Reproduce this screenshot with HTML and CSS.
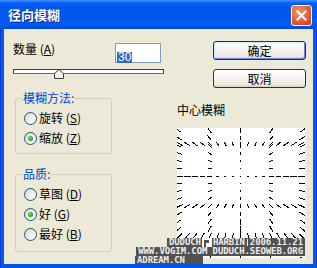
FILE: index.html
```html
<!DOCTYPE html>
<html lang="zh-CN">
<head>
    <meta charset="UTF-8">
    <meta name="viewport" content="width=device-width, initial-scale=1.0">
    <title>径向模糊</title>
    <link rel="stylesheet" href="styles.css">
</head>
<body>

    <div class="window">
        <!-- Title bar -->
        <div class="titlebar">
            <span class="title">径向模糊</span>
            <span class="close">
                <svg width="13" height="13" viewBox="0 0 13 13">
                    <path d="M2.5 2.5 L10.5 10.5 M10.5 2.5 L2.5 10.5" stroke="#fff" stroke-width="2.2" stroke-linecap="square"/>
                </svg>
            </span>
        </div>

        <div class="client">
            <!-- Left column: amount, slider, options -->
            <div class="left">
                <div class="amount">
                    <span class="label">数量 (<u>A</u>)</span>
                    <div class="field"><span class="sel">30</span></div>
                </div>

                <div class="slider">
                    <div class="track"></div>
                    <svg class="thumb" width="10" height="10" viewBox="0 0 10 10">
                        <polygon points="0.5,9.5 0.5,4.5 5,0.5 9.5,4.5 9.5,9.5" fill="#F4F3EE" stroke="#3C3C3C"/>
                    </svg>
                </div>

                <fieldset class="group method">
                    <legend>模糊方法:</legend>
                    <div class="radio"><span class="dot"></span>旋转 (<u>S</u>)</div>
                    <div class="radio"><span class="dot on"></span>缩放 (<u>Z</u>)</div>
                </fieldset>

                <fieldset class="group quality">
                    <legend>品质:</legend>
                    <div class="radio"><span class="dot"></span>草图 (<u>D</u>)</div>
                    <div class="radio"><span class="dot on"></span>好 (<u>G</u>)</div>
                    <div class="radio"><span class="dot"></span>最好 (<u>B</u>)</div>
                </fieldset>
            </div>

            <!-- Right column: buttons and blur centre -->
            <div class="right">
                <div class="btn default">确定</div>
                <div class="btn">取消</div>
                <div class="center-label">中心模糊</div>
                <svg class="preview" id="preview" width="128" height="130" viewBox="0 0 128 130" shape-rendering="crispEdges"></svg>
            </div>
        </div>

        <!-- Watermark stamped over the screenshot -->
        <div class="watermark">
            <div class="wm-row">DUDUCH<svg class="wm-logo" width="10" height="9" viewBox="0 0 10 9"><rect width="10" height="9" fill="#fff"/><rect x="2" y="2" width="5" height="3" fill="#515151"/><rect x="2" y="5" width="2" height="4" fill="#515151"/></svg>HARBIN<span class="wm-bar"></span>2006.11.21</div>
            <div class="wm-row">WWW.VOGIM.COM DUDUCH.SEOWEB.ORG</div>
            <div class="wm-row short">ADREAM.CN</div>
        </div>
    </div>

    <script src="script.js"></script>
</body>
</html>
```

FILE: styles.css
```css
* {
    box-sizing: border-box;
}
body {
    margin: 0;
    font-family: "Noto Sans CJK SC", "Liberation Sans", sans-serif;
    font-size: 12px;
}
.window {
    position: relative;
    width: 317px;
    height: 268px;
    padding: 0 4px 4px;
    display: flex;
    flex-direction: column;
    background: linear-gradient(to right, #0831D9, #0A5EEB 2px, #0055E5 4px, #0055E5 313px, #0A5EEB 315px, #0831D9);
}
.titlebar {
    height: 29px;
    margin: 0 -4px;
    padding: 1px 5px 0 8px;
    display: flex;
    align-items: center;
    justify-content: space-between;
    background: linear-gradient(to bottom, #3D95FF 0, #0A5FF0 3px, #0058EE 7px, #0058EE 60%, #005BF0 85%, #0046D6 100%);
}
.title {
    color: #fff;
    font-weight: bold;
    font-size: 13px;
    line-height: 14px;
    text-shadow: 1px 1px #0B2A8C;
}
.close {
    width: 21px;
    height: 21px;
    border: 1px solid #fff;
    border-radius: 3px;
    display: flex;
    align-items: center;
    justify-content: center;
    background: radial-gradient(circle at 35% 30%, #F0936C, #E0603A 55%, #C63C1C);
}
.client {
    flex: 1;
    display: flex;
    background: #ECE9D8;
}

/* left column */
.left {
    width: 160px;
    padding: 14px 0 0 9px;
}
.amount {
    display: flex;
    align-items: flex-start;
    height: 20px;
    padding-right: 3px;
}
.label {
    line-height: 12px;
}
u {
    text-decoration-thickness: 1px;
    text-underline-offset: 1px;
}
.field {
    margin-left: auto;
    width: 46px;
    height: 20px;
    border: 1px solid #7F9DB9;
    background: #fff;
    padding: 3px 0 0 1px;
}
.sel {
    display: inline-block;
    height: 11px;
    padding: 0 1px;
    background: #316AC5;
    color: #fff;
    font-family: "Liberation Sans", sans-serif;
    font-size: 12px;
    line-height: 11px;
}
.slider {
    position: relative;
    height: 10px;
    margin-top: 6px;
    width: 151px;
}
.track {
    height: 5px;
    border: 1px solid #3C3C3C;
    border-bottom-color: #6A6A6A;
    background: #fff;
}
.thumb {
    position: absolute;
    left: 41px;
    top: 0;
}
.group {
    margin: 13px 0 0 2px;
    width: 97px;
    min-width: 0;
    border: 1px solid #D0D0BF;
    border-radius: 3px;
    padding: 4px 0 5px 8px;
}
.group legend {
    color: #0046D5;
    font-size: 12px;
    line-height: 12px;
    padding: 0 1px;
    margin-left: -2px;
}
.quality {
    margin-top: 14px;
    padding-bottom: 7px;
}
.radio {
    display: flex;
    align-items: center;
    height: 20px;
    line-height: 12px;
}
.dot {
    position: relative;
    width: 13px;
    height: 13px;
    margin-right: 2px;
    border: 1px solid #1C5180;
    border-radius: 50%;
    background: linear-gradient(135deg, #D6D3C8, #F4F3EE 60%, #fff);
}
.dot.on::after {
    content: "";
    position: absolute;
    left: 3px;
    top: 3px;
    width: 5px;
    height: 5px;
    border-radius: 50%;
    background: radial-gradient(circle at 40% 40%, #6BDA6B, #21A121 70%);
}

/* right column */
.right {
    margin-left: 13px;
    width: 129px;
    padding-top: 12px;
    display: flex;
    flex-direction: column;
    align-items: flex-end;
}
.btn {
    width: 93px;
    height: 19px;
    border: 1px solid #003C74;
    border-radius: 3px;
    background: linear-gradient(to bottom, #fff, #F5F4EF 45%, #ECEAE1 85%, #D6D0C5);
    text-align: center;
    line-height: 17px;
    color: #000;
}
.btn.default {
    box-shadow: inset 1px 1px #CEE7FF, inset -1px -1px #6982EE;
}
.btn + .btn {
    margin-top: 9px;
}
.center-label {
    align-self: flex-start;
    margin-top: 16px;
    line-height: 12px;
}
.preview {
    align-self: flex-start;
    margin-top: 12px;
    background: #fff;
}

/* watermark */
.watermark {
    position: absolute;
    left: 135px;
    top: 238px;
    width: 170px;
    display: flex;
    flex-direction: column;
    align-items: flex-end;
}
.wm-row {
    height: 9px;
    padding: 0 2px;
    background: #515151;
    color: #EDEDED;
    font-family: "DejaVu Sans Mono", monospace;
    font-weight: bold;
    font-size: 9px;
    line-height: 9px;
    letter-spacing: -0.1px;
    white-space: nowrap;
    display: flex;
    align-items: center;
}
.wm-row.short {
    align-self: flex-start;
    width: 68px;
    height: 8px;
}
.wm-logo {
    margin: 0 1px;
}
.wm-bar {
    width: 1px;
    height: 7px;
    margin: 0 2px;
    background: #EDEDED;
}
```

FILE: script.js
```js
// blur centre preview: grid of short streaks pointing away from the centre
var svg = document.getElementById('preview');
var ns = 'http://www.w3.org/2000/svg';
var cx = 63.5, cy = 48;
var cols = [1.5, 32.5, 63.5, 94.5, 125.5];
var rows = [16, 48, 78, 108];
var step = 7.6;

function streak(x, y) {
    var dx = x - cx, dy = y - cy;
    var d = Math.sqrt(dx * dx + dy * dy);
    var len = Math.min(7, Math.max(1.5, d * 0.13));
    var ux = d ? dx / d : 1, uy = d ? dy / d : 0;
    var line = document.createElementNS(ns, 'line');
    line.setAttribute('x1', (x - ux * len / 2).toFixed(2));
    line.setAttribute('y1', (y - uy * len / 2).toFixed(2));
    line.setAttribute('x2', (x + ux * len / 2).toFixed(2));
    line.setAttribute('y2', (y + uy * len / 2).toFixed(2));
    line.setAttribute('stroke', '#000');
    line.setAttribute('stroke-width', '1');
    svg.appendChild(line);
}

cols.forEach(function (x) {
    for (var k = -8; k <= 12; k++) {
        var y = cy + k * step;
        if (y > -2 && y < 132) streak(x, y);
    }
});
rows.forEach(function (y) {
    for (var k = -9; k <= 9; k++) {
        var x = cx + k * step;
        if (x > -2 && x < 130) streak(x, y);
    }
});
```
